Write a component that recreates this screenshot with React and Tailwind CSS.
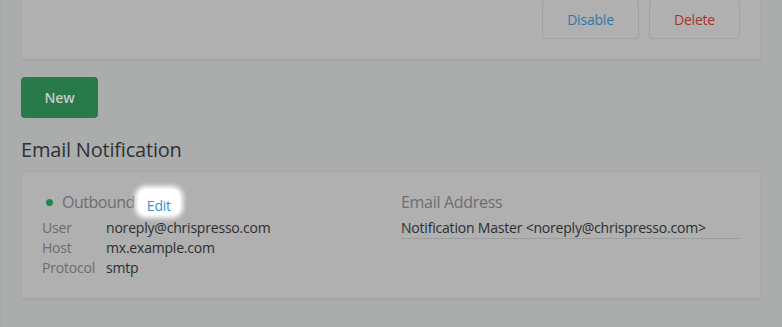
export default function App() {
  return (
    <div className="relative h-[327px] w-[782px] overflow-hidden border-l-2 border-[#a6a8a7] bg-[#abadac] pl-[19px] pr-[21px] font-['Open_Sans',sans-serif]">
      {/* previous channel panel, cut at the top */}
      <div className="-mt-[12px] border border-[#a5a6a6] bg-[#b0b0b0] px-5 pb-5 pt-[10px] shadow-[0_2px_0_#a7a8a8]">
        <div className="flex justify-end gap-[10px]">
          <button className="h-[40px] w-[97px] rounded-[4px] border border-[#a0a1a1] text-[14px] tracking-[-0.2px] text-[#2f78a8]">
            Disable
          </button>
          <button className="h-[40px] w-[91px] rounded-[4px] border border-[#a0a1a1] text-[14px] tracking-[-0.2px] text-[#a8332f]">
            Delete
          </button>
        </div>
      </div>

      <button className="mt-[17px] h-[41px] w-[77px] rounded-[4px] bg-[#287a4a] text-[14px] font-semibold tracking-[-0.2px] text-[#c4ccc6]">
        New
      </button>

      <h2 className="mt-[18px] text-[20px] leading-[28px] tracking-[-0.2px] text-[#2e3235]">Email Notification</h2>

      <div className="mt-[7px] border border-[#a5a6a6] bg-[#b0b0b0] px-5 pb-5 pt-[18px] shadow-[0_2px_0_#a7a8a8]">
        <div className="grid grid-cols-2 gap-[20px]">
          <div>
            <div className="flex h-[24px] items-center">
              <span className="ml-[4px] mr-[9px] h-[7px] w-[7px] rounded-full bg-[#1e8a4d]" />
              <span className="text-[16px] leading-[24px] tracking-[-0.5px] text-[#6c6e70]">Outbound</span>
              <span className="ml-[3px] h-[26px] rounded-[8px] bg-white px-[9px] pt-[9px] text-[14px] leading-[16px] tracking-[-0.2px] text-[#3d92d5] shadow-[0_0_5px_3px_#fff]">
                Edit
              </span>
            </div>
            <div className="mt-[4px] text-[14px] leading-[20px] tracking-[-0.2px]">
              <div className="flex">
                <span className="w-[64px] text-[#6a6c6e]">User</span>
                <span className="text-[#2b2e31]">noreply@chrispresso.com</span>
              </div>
              <div className="flex">
                <span className="w-[64px] text-[#6a6c6e]">Host</span>
                <span className="text-[#2b2e31]">mx.example.com</span>
              </div>
              <div className="flex">
                <span className="w-[64px] text-[#6a6c6e]">Protocol</span>
                <span className="text-[#2b2e31]">smtp</span>
              </div>
            </div>
          </div>
          <div>
            <div className="text-[16px] leading-[24px] tracking-[-0.3px] text-[#6c6e70]">Email Address</div>
            <div className="mt-[4px] border-b border-[#9c9d9d] text-[14px] leading-[20px] tracking-[-0.2px] text-[#2b2e31]">
              Notification Master &lt;noreply@chrispresso.com&gt;
            </div>
          </div>
        </div>
      </div>
    </div>
  );
}
